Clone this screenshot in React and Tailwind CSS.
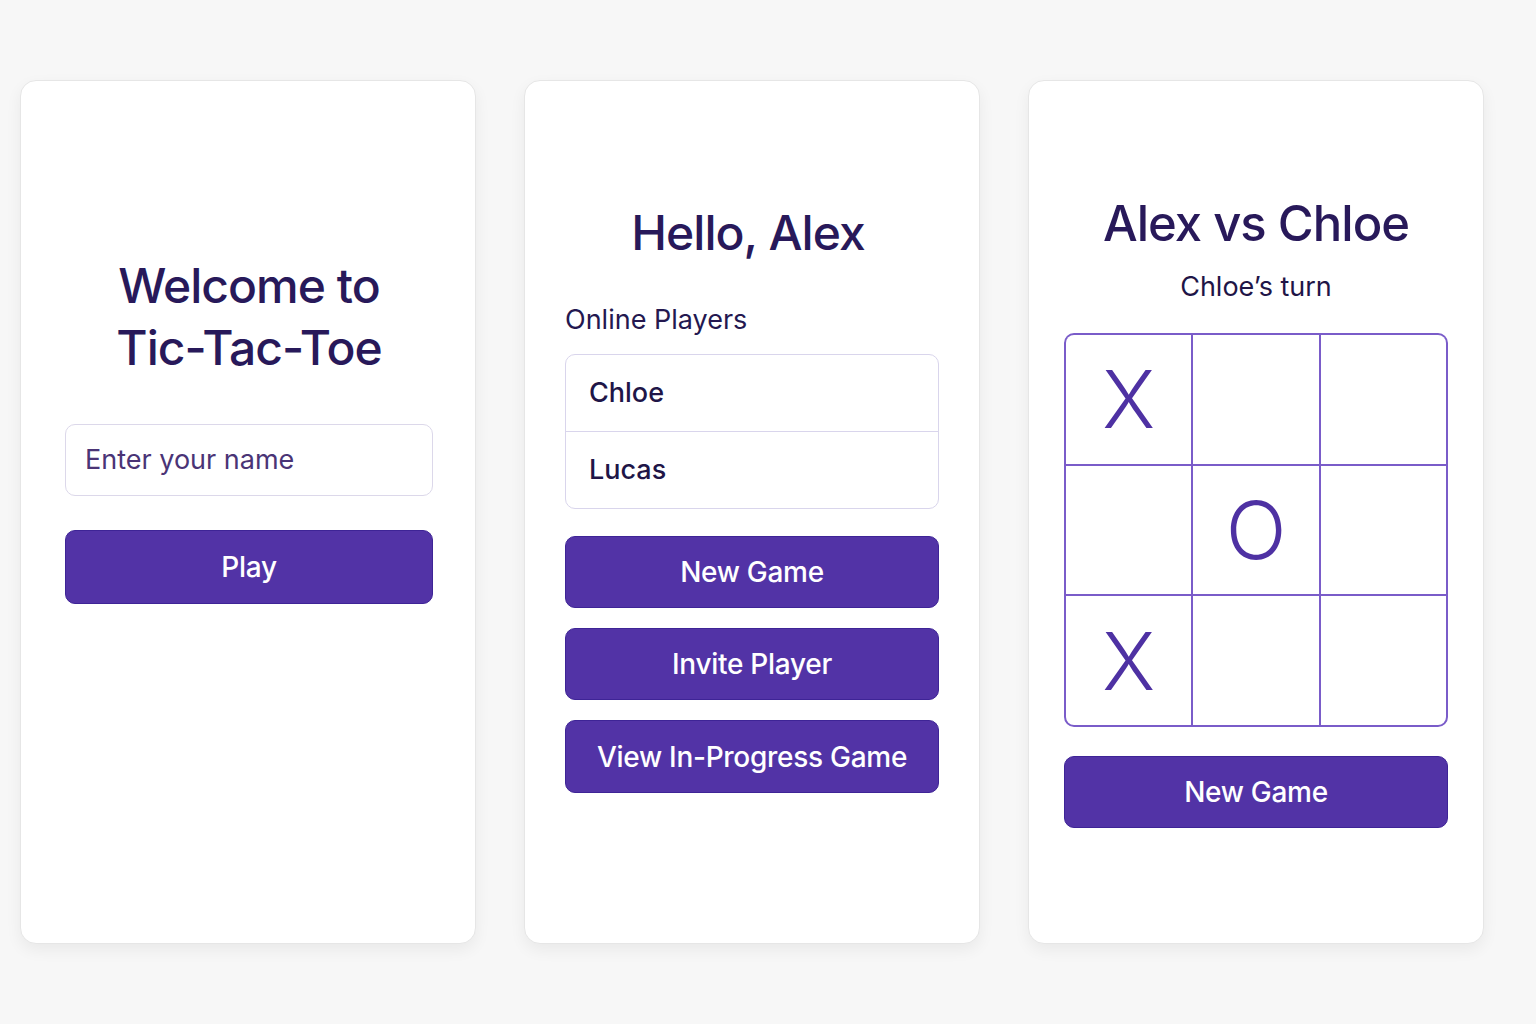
import React from 'react';

// simple three-screen mockup of the tic-tac-toe flow
const board = ['X', '', '', '', 'O', '', 'X', '', ''];

function Card({ className, children }) {
  return (
    <div
      className={
        'w-[456px] h-[864px] shrink-0 rounded-[16px] bg-white border border-[#e6e6e6] shadow-[0_6px_16px_rgba(0,0,0,0.06)] flex flex-col ' +
        className
      }
    >
      {children}
    </div>
  );
}

function PurpleButton({ children, className = '' }) {
  return (
    <button
      className={
        'w-full rounded-[10px] bg-[#5233a6] border border-[#3e2496] text-white text-[28px] font-medium tracking-[-0.01em] flex items-center justify-center ' +
        className
      }
    >
      {children}
    </button>
  );
}

export default function App() {
  return (
    <div
      className="min-h-screen w-full bg-[#f7f7f7] text-[#28195a]"
      style={{ fontFamily: 'Inter, "Noto Sans", sans-serif' }}
    >
      <div className="flex gap-[48px] pl-[20px] pt-[80px]">
        {/* welcome */}
        <Card className="pl-[44px] pr-[42px] pt-[174px]">
          <h1 className="text-center text-[48px] leading-[62px] font-medium tracking-[-0.02em]">
            Welcome to
            <br />
            Tic-Tac-Toe
          </h1>
          <div className="mt-[45px] h-[72px] rounded-[10px] border border-[#dcd8ea] flex items-center px-[19px] text-[27px] text-[#4a3476]">
            Enter your name
          </div>
          <PurpleButton className="mt-[34px] h-[74px]">Play</PurpleButton>
        </Card>

        {/* lobby */}
        <Card className="w-[455px] px-[40px] pt-[123px]">
          <h1 className="text-center text-[48px] leading-[58px] font-medium tracking-[-0.02em] pr-[8px]">
            Hello, Alex
          </h1>
          <div className="mt-[42px] text-[27px] leading-[32px] text-[#241850]">Online Players</div>
          <div className="mt-[18px] rounded-[10px] border border-[#d9d5ec] flex flex-col">
            <div className="h-[77px] flex items-center px-[23px] text-[27px] font-medium text-[#201547] border-b border-[#d9d5ec]">
              Chloe
            </div>
            <div className="h-[76px] flex items-center px-[23px] text-[27px] font-medium text-[#201547]">
              Lucas
            </div>
          </div>
          <div className="mt-[27px] flex flex-col gap-[20px]">
            <PurpleButton className="h-[72px]">New Game</PurpleButton>
            <PurpleButton className="h-[72px]">Invite Player</PurpleButton>
            <PurpleButton className="h-[73px]">View In-Progress Game</PurpleButton>
          </div>
        </Card>

        {/* game */}
        <Card className="pl-[35px] pr-[35px] pt-[114px]">
          <h1 className="text-center text-[49px] leading-[58px] font-medium tracking-[-0.02em]">
            Alex vs Chloe
          </h1>
          <div className="mt-[18px] text-center text-[27px] leading-[32px] text-[#1f1547]">Chloe’s turn</div>
          <div className="mt-[30px] h-[394px] rounded-[10px] border-2 border-[#7a5cc9] bg-[#7a5cc9] overflow-hidden grid grid-cols-3 grid-rows-3 gap-[2px]">
            {board.map((v, i) => (
              <div
                key={i}
                className="bg-white flex items-center justify-center text-[80px] font-light text-[#4e31a3] leading-none"
              >
                {v}
              </div>
            ))}
          </div>
          <PurpleButton className="mt-[29px] h-[72px]">New Game</PurpleButton>
        </Card>
      </div>
    </div>
  );
}
